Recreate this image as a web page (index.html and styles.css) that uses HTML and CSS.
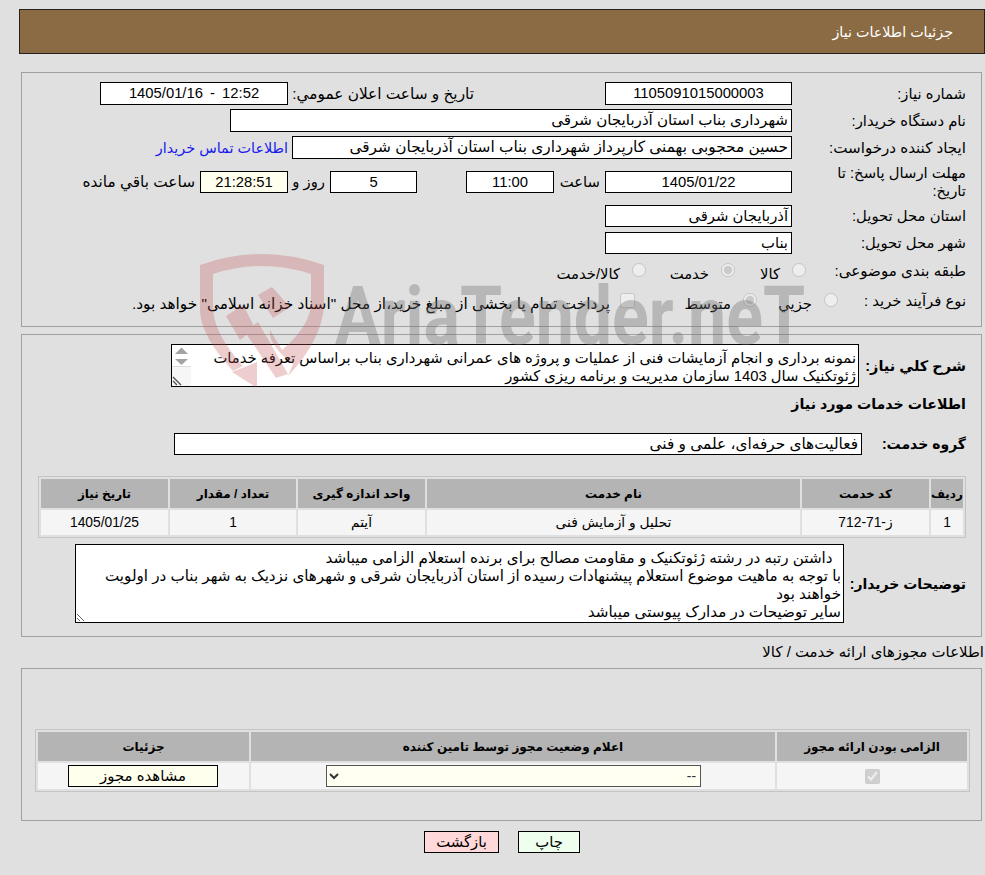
FILE: index.html
```html
<!DOCTYPE html>
<html lang="fa" dir="rtl">
<head>
<meta charset="utf-8">
<title>جزئیات اطلاعات نیاز</title>
<link rel="stylesheet" href="styles.css">
</head>
<body>
<header class="page-title">جزئیات اطلاعات نیاز</header>

<section class="panel panel-main">
  <div class="row">
    <span class="label lw174">شماره نیاز:</span>
    <span class="field w187 center">1105091015000003</span>
    <span class="label announce wide">تاریخ و ساعت اعلان عمومي:</span>
    <span class="field w188 center spaced" dir="ltr">1405/01/16 - 12:52</span>
  </div>
  <div class="row">
    <span class="label lw174">نام دستگاه خریدار:</span>
    <span class="field w562 mid">شهرداری بناب استان آذربایجان شرقی</span>
  </div>
  <div class="row">
    <span class="label lw174 mid">ایجاد کننده درخواست:</span>
    <span class="field w500 wide">حسین محجوبی بهمنی کارپرداز شهرداری بناب استان آذربایجان شرقی</span>
    <a class="contact" href="#">اطلاعات تماس خریدار</a>
  </div>
  <div class="row row-tall">
    <span class="label lw174 wrap">مهلت ارسال پاسخ: تا تاریخ:</span>
    <span class="field w187 short center">1405/01/22</span>
    <span class="label unit w51">ساعت</span>
    <span class="field w88 short center">11:00</span>
    <span class="spacer"></span>
    <span class="field w87 short center">5</span>
    <span class="label unit w42">روز و</span>
    <span class="field w88 short center timer">21:28:51</span>
    <span class="label unit wide">ساعت باقي مانده</span>
  </div>
  <div class="row">
    <span class="label lw174">استان محل تحویل:</span>
    <span class="field w187 short">آذربایجان شرقی</span>
  </div>
  <div class="row">
    <span class="label lw174">شهر محل تحویل:</span>
    <span class="field w187 short">بناب</span>
  </div>
  <div class="row row-option">
    <span class="label lw160 mid">طبقه بندی موضوعی:</span>
    <label class="option o71"><input type="radio" disabled name="cat"><span>کالا</span></label>
    <label class="option o89"><input type="radio" disabled checked name="cat"><span>خدمت</span></label>
    <label class="option"><input type="radio" disabled name="cat"><span>کالا/خدمت</span></label>
  </div>
  <div class="row row-option">
    <span class="label lw128">نوع فرآیند خرید :</span>
    <label class="option o81"><input type="radio" disabled name="proc"><span>جزيي</span></label>
    <label class="option o122"><input type="radio" disabled checked name="proc"><span>متوسط</span></label>
    <label class="option wide"><input class="box" type="checkbox" disabled><span>پرداخت تمام یا بخشی از مبلغ خرید،از محل "اسناد خزانه اسلامی" خواهد بود.</span></label>
  </div>
</section>

<section class="panel panel-need">
  <div class="row row-summary">
    <span class="label strong strong-wide lw107">شرح كلي نياز:</span>
    <span class="note-wrap">
      <textarea class="note note-summary" readonly>نمونه برداری و انجام آزمایشات فنی از عملیات و پروژه های عمرانی شهرداری بناب براساس تعرفه خدمات ژئوتکنیک سال 1403 سازمان مدیریت و برنامه ریزی کشور</textarea>
      <svg class="scroll" viewBox="0 0 19 41" aria-hidden="true">
        <rect x="0" y="21" width="19" height="20" fill="#f6f6f6"/>
        <rect x="0" y="21" width="19" height="1" fill="#dcdcdc"/>
        <path d="M3 9 L9.5 2.5 L16 9 Z" fill="#a3a3a3"/>
        <path d="M3 14 L16 14 L9.5 20 Z" fill="#a3a3a3"/>
        <path d="M1 32 L9 40 M1 36 L5 40" stroke="#555" stroke-width="1.4" fill="none"/>
      </svg>
    </span>
  </div>
  <h2 class="need-heading">اطلاعات خدمات مورد نیاز</h2>
  <div class="row row-group">
    <span class="label strong lw104">گروه خدمت:</span>
    <span class="field w688 short wide">فعالیت‌های حرفه‌ای، علمی و فنی</span>
  </div>
  <table class="grid grid-items">
    <colgroup><col class="c32"><col class="c127"><col class="c373"><col class="c127"><col class="c126"><col class="c127"></colgroup>
    <thead><tr><th>ردیف</th><th>کد خدمت</th><th>نام خدمت</th><th>واحد اندازه گیری</th><th>تعداد / مقدار</th><th>تاریخ نیاز</th></tr></thead>
    <tbody><tr><td>1</td><td>ز-71-712</td><td>تحلیل و آزمایش فنی</td><td>آیتم</td><td>1</td><td>1405/01/25</td></tr></tbody>
  </table>
  <div class="row row-notes">
    <span class="label strong lw122">توضیحات خریدار:</span>
    <textarea class="note note-buyer" readonly>  داشتن رتبه در رشته ژئوتکنیک و مقاومت مصالح برای برنده استعلام الزامی میباشد
با توجه به ماهیت موضوع استعلام پیشنهادات رسیده از استان آذربایجان شرقی و شهرهای نزدیک به شهر بناب در اولویت خواهند بود
سایر توضیحات در مدارک پیوستی میباشد</textarea>
  </div>
</section>

<h3 class="license-title">اطلاعات مجوزهای ارائه خدمت / کالا</h3>
<section class="panel panel-license">
  <table class="grid grid-license">
    <colgroup><col class="c190"><col class="c524"><col class="c211"></colgroup>
    <thead><tr><th>الزامی بودن ارائه مجوز</th><th>اعلام وضعیت مجوز توسط تامین کننده</th><th>جزئیات</th></tr></thead>
    <tbody><tr>
      <td><input class="box" type="checkbox" checked disabled></td>
      <td><select class="status"><option>--</option></select></td>
      <td><button class="view" type="button">مشاهده مجوز</button></td>
    </tr></tbody>
  </table>
</section>

<div class="actions">
  <button class="act print" type="button">چاپ</button>
  <button class="act back" type="button">بازگشت</button>
</div>

<svg class="watermark" viewBox="0 0 985 875" aria-hidden="true">
  <g class="wm-red">
    <path d="M200 265 Q262 243 324 265 L324 305 Q322 340 288 376 L293 364 Q268 345 270 330 L282 350 Q312 325 311 300 L311 274 Q262 258 213 274 L213 310 Q215 335 243 366 L233 371 Q200 335 200 310 Z"/>
    <path d="M226 316 L243 305 L255 328 L240 340 Z"/>
    <path d="M258 295 L272 287 L290 307 L273 318 Z"/>
    <path d="M245 332 L258 322 L288 374 L276 378 Z"/>
    <path d="M232 372 L257 362 L257 388 Z"/>
  </g>
  <text class="wm-text" x="335" y="344" textLength="470" lengthAdjust="spacingAndGlyphs" direction="ltr" unicode-bidi="bidi-override">AriaTender.neT</text>
</svg>
</body>
</html>
```
FILE: styles.css
```css
* { box-sizing: border-box; }
html { background: #e0e0e0; }
body {
  position: relative;
  margin: 0;
  height: 875px;
  overflow: hidden;
  font-family: "Liberation Sans", "DejaVu Sans", sans-serif;
  font-size: 14.8px;
  line-height: 18px;
  color: #000;
  background: #e0e0e0;
}
.page-title {
  height: 45px;
  margin: 9px 0 0 19px;
  padding: 13px 31px 0 0;
  border: 1px solid #222;
  background: #8b6b43;
  color: #fff;
  font-size: 14.3px;
}
.panel {
  margin: 0 3px 0 0;
  width: 961px;
  border: 1px solid #a0a0a0;
  padding-right: 15px;
}
.panel-main { height: 255px; margin-top: 18px; padding-top: 9px; }
.panel-need { height: 303px; margin-top: 7px; padding-top: 9px; }
.panel-license { height: 153px; padding: 60px 11px 0 0; }
.row { display: flex; align-items: center; height: 23px; margin-bottom: 4px; }
.row-tall { height: 37px; }
.row-option { height: 26px; margin-bottom: 4px; }
.label { flex: none; display: block; white-space: nowrap; }
.wrap { white-space: normal; padding-left: 8px; }
.mid { font-size: 15.1px; }
.wide { font-size: 15.35px; }
.spaced { word-spacing: 3px; }
.strong { font-weight: bold; font-size: 14px; }
.strong-wide { font-size: 14.5px; }
.lw174 { width: 174px; }
.lw160 { width: 160px; }
.lw128 { width: 128px; }
.lw107 { width: 107px; }
.lw104 { width: 104px; }
.lw122 { width: 122px; }
.announce { width: 186px; margin-right: 131px; }
.unit { padding-right: 5px; }
.w51 { width: 51px; }
.w42 { width: 42px; }
.field {
  flex: none;
  display: block;
  height: 23px;
  padding: 1px 3px 0;
  border: 1px solid #000;
  background: #fff;
  white-space: nowrap;
  overflow: hidden;
}
.short { height: 22px; padding-top: 1px; }
.center { text-align: center; }
.timer { background: #ffffee; }
.w187 { width: 187px; }
.w188 { width: 188px; }
.w562 { width: 562px; }
.w500 { width: 500px; }
.w88 { width: 88px; }
.w87 { width: 87px; }
.w688 { width: 688px; }
.spacer { flex: none; width: 49px; }
.contact { margin-right: 4px; color: #1a1aee; font-size: 14.4px; text-decoration: none; white-space: nowrap; }
.option { flex: none; display: flex; align-items: center; white-space: nowrap; }
.option input { flex: none; width: 14px; height: 14px; margin: -2px 0 0 12px; }
.option input.box { width: 15px; height: 15px; margin-left: 10px; }
.option span { margin-top: 6px; }
.o71 { width: 71px; }
.o89 { width: 89px; }
.o81 { width: 81px; }
.o122 { width: 122px; }
.note {
  flex: none;
  display: block;
  margin: 0;
  padding: 4px 2px 0;
  border: 1px solid #000;
  border-radius: 0;
  background: #fff;
  font: inherit;
  color: #000;
  outline: none;
}
.note-wrap { position: relative; flex: none; display: block; width: 688px; height: 43px; }
.scroll { position: absolute; left: 1px; top: 1px; width: 19px; height: 41px; }
.row-summary { height: 43px; margin-bottom: 5px; }
.note-summary { width: 688px; height: 43px; padding-left: 24px; overflow: hidden; resize: none; }
.need-heading { margin: 0 0 17px; height: 24px; font-size: 14.2px; line-height: 24px; font-weight: bold; }
.row-group { height: 22px; margin-bottom: 21px; }
.grid {
  table-layout: fixed;
  border-collapse: separate;
  border-spacing: 2px;
  border: 1px solid #c4c4c4;
}
.grid th { height: 29px; padding: 0; background: #b4b4b4; font-size: 12px; font-weight: bold; text-align: center; }
.grid td { padding: 0; background: #f5f5f5; font-size: 13.8px; text-align: center; }
.grid-items { width: 928px; }
.grid-items td { height: 25px; }
.grid-license { width: 935px; }
.grid-license td { height: 26px; }
.c32 { width: 32px; }
.c127 { width: 127px; }
.c373 { width: 373px; }
.c126 { width: 126px; }
.c190 { width: 190px; }
.c524 { width: 524px; }
.c211 { width: 211px; }
.row-notes { height: 79px; margin-top: 6px; }
.note-buyer { width: 769px; height: 79px; overflow: hidden; font-size: 15.15px; }
.license-title {
  height: 31px;
  margin: 0;
  padding: 6px 1px 0 0;
  font-size: 14.95px;
  line-height: 18px;
  font-weight: normal;
  white-space: nowrap;
}
.box { display: block; width: 15px; height: 15px; margin: 0 auto; }
.status {
  display: block;
  width: 375px;
  height: 22px;
  margin-right: 74px;
  border: 1px solid #555;
  border-radius: 0;
  background-color: #fffff2;
  font: inherit;
  color: #333;
}
.view {
  display: block;
  width: 150px;
  height: 22px;
  margin-right: 31px;
  padding: 0;
  border: 1px solid #000;
  border-radius: 0;
  background: #ffffee;
  font-family: inherit;
  font-size: 14.9px;
  color: #000;
}
.actions { display: flex; justify-content: flex-start; gap: 19px; margin: 10px 405px 0 0; }
.act {
  height: 22px;
  padding: 0;
  border: 1px solid #000;
  border-radius: 0;
  font: inherit;
  color: #000;
}
.print { width: 62px; background: #eeffee; }
.back { width: 75px; background: #ffd9d9; }
.watermark {
  position: absolute;
  top: 0;
  left: 0;
  width: 985px;
  height: 875px;
  pointer-events: none;
}
.wm-red { fill: #c25050; opacity: 0.28; }
.wm-text {
  font-family: "Roboto", "Liberation Sans", sans-serif;
  font-weight: bold;
  font-size: 82px;
  fill: #707070;
  opacity: 0.36;
}
```
